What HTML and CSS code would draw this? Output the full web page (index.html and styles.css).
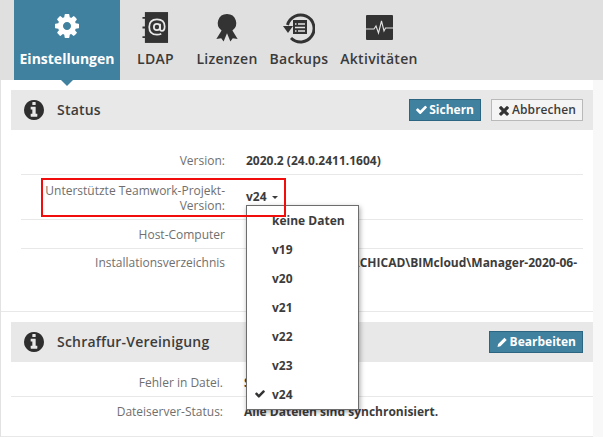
FILE: index.html
```html
<!DOCTYPE html>
<html lang="de">
<head>
<meta charset="utf-8">
<title>Einstellungen</title>
<link rel="stylesheet" href="styles.css">
</head>
<body>
<nav class="tabs">
  <a class="tab tab-active">
    <svg class="tab-icon gear" viewBox="0 0 1792 1792"><path d="M1152 896q0-106-75-181t-181-75-181 75-75 181 75 181 181 75 181-75 75-181zm512-109v222q0 12-8 23t-20 13l-185 28q-19 54-39 91 35 50 107 138 10 12 10 25t-9 23q-27 37-99 108t-94 71q-12 0-26-9l-138-108q-44 23-91 38-16 136-29 186-7 28-36 28h-222q-14 0-24.500-8.500t-11.500-21.500l-28-184q-49-16-90-37l-141 107q-10 9-25 9-14 0-25-11-126-114-165-168-7-10-7-23 0-12 8-23 15-21 51-66.500t54-70.500q-27-50-41-99l-183-27q-13-2-21-12.500t-8-23.500v-222q0-12 8-23t19-13l186-28q14-46 39-92-40-57-107-138-10-12-10-24 0-10 9-23 26-36 98.500-107.500t94.500-71.500q13 0 26 10l138 107q44-23 91-38 16-136 29-186 7-28 36-28h222q14 0 24.500 8.500t11.500 21.500l28 184q49 16 90 37l142-107q9-9 24-9 13 0 25 10 129 119 165 170 7 8 7 22 0 12-8 23-15 21-51 66.500t-54 70.500q26 50 41 98l183 28q13 2 21 12.500t8 23.500z"/></svg>
    <span>Einstellungen</span>
  </a>
  <a class="tab tab-ldap">
    <svg class="tab-icon" viewBox="0 0 28 34">
      <rect x="3" y="1" width="24" height="32" fill="#333"/>
      <path d="M0.5 7h4M0.5 17h4M0.5 27h4" stroke="#333" stroke-width="2" fill="none"/>
      <circle cx="15.500" cy="16.500" r="3.200" fill="none" stroke="#e8e8e8" stroke-width="1.800"/>
      <path d="M18.700 13v5.500q0 2 2 2 2.800 0 2.800-4.500 0-7.500-8-7.500-8 0-8 8 0 8 8 8 2.500 0 4.500-1" fill="none" stroke="#e8e8e8" stroke-width="1.800"/>
    </svg>
    <span>LDAP</span>
  </a>
  <a class="tab tab-license">
    <svg class="tab-icon" viewBox="0 0 24 30"><path d="M12 1a9.500 9.500 0 0 1 5.600 17.200L23 27l-5-1-2.500 3.500-3.500-8.500-3.500 8.500L6 26l-5 1 5.400-8.800A9.500 9.500 0 0 1 12 1z" fill="#333"/></svg>
    <span>Lizenzen</span>
  </a>
  <a class="tab tab-backup">
    <svg class="tab-icon" viewBox="0 0 32 32">
      <path d="M4.500 13A13.500 13.500 0 1 1 8 26" fill="none" stroke="#333" stroke-width="3"/>
      <path d="M0 14h10l-5 7z" fill="#333"/>
      <rect x="10" y="8" width="14" height="14" fill="#333"/>
      <path d="M12 12h1.500M15 12h7M12 15.500h10M12 19h1.500M15 19h7" stroke="#e4e4e4" stroke-width="1.300" fill="none"/>
    </svg>
    <span>Backups</span>
  </a>
  <a class="tab tab-activity">
    <svg class="tab-icon" viewBox="0 0 27 25">
      <rect width="27" height="25" rx="1" fill="#333"/>
      <path d="M0 14h8l2-3 2.500 7 3-12 2.500 10 1.500-3h7.500" fill="none" stroke="#e4e4e4" stroke-width="1.100"/>
    </svg>
    <span>Aktivitäten</span>
  </a>
</nav>

<main class="panel">
  <section class="section section-status">
    <header class="section-head">
      <svg class="info" viewBox="128 128 1536 1536"><path d="M1152 1376v-160q0-14-9-23t-23-9h-96v-512q0-14-9-23t-23-9h-320q-14 0-23 9t-9 23v160q0 14 9 23t23 9h96v320h-96q-14 0-23 9t-9 23v160q0 14 9 23t23 9h448q14 0 23-9t9-23zm-128-896v-160q0-14-9-23t-23-9h-192q-14 0-23 9t-9 23v160q0 14 9 23t23 9h192q14 0 23-9t9-23zm640 416q0 209-103 385.500t-279.500 279.500-385.500 103-385.500-103-279.500-279.500-103-385.500 103-385.500 279.500-279.500 385.500-103 385.500 103 279.500 279.500 103 385.500z"/></svg>
      <h2>Status</h2>
      <div class="actions">
        <button class="btn btn-primary"><svg class="btn-icon" viewBox="110 320 1570 1240"><path d="M1671 566q0 40-28 68l-724 724-136 136q-28 28-68 28t-68-28l-136-136-362-362q-28-28-28-68t28-68l136-136q28-28 68-28t68 28l294 295 656-657q28-28 68-28t68 28l136 136q28 28 28 68z"/></svg>Sichern</button>
        <button class="btn btn-plain"><svg class="btn-icon btn-icon-x" viewBox="290 260 1210 1300"><path d="M1490 1322q0 40-28 68l-136 136q-28 28-68 28t-68-28l-294-294-294 294q-28 28-68 28t-68-28l-136-136q-28-28-28-68t28-68l294-294-294-294q-28-28-28-68t28-68l136-136q28-28 68-28t68 28l294 294 294-294q28-28 68-28t68 28l136 136q28 28 28 68t-28 68l-294 294 294 294q28 28 28 68z"/></svg>Abbrechen</button>
      </div>
    </header>
    <div class="rows">
      <div class="row row-version">
        <div class="label">Version:</div>
        <div class="value">2020.2 (24.0.2411.1604)</div>
      </div>
      <div class="row row-team">
        <div class="label">Unterstützte Teamwork-Projekt-Version:</div>
        <div class="value value-select">v24<i class="caret"></i></div>
      </div>
      <div class="row row-host">
        <div class="label">Host-Computer</div>
        <div class="value"></div>
      </div>
      <div class="row row-path">
        <div class="label">Installationsverzeichnis</div>
        <div class="value">C:\Programmes\ARCHICAD\BIMcloud\Manager-2020-06-</div>
      </div>
    </div>
  </section>

  <section class="section section-hatch">
    <header class="section-head">
      <svg class="info" viewBox="128 128 1536 1536"><path d="M1152 1376v-160q0-14-9-23t-23-9h-96v-512q0-14-9-23t-23-9h-320q-14 0-23 9t-9 23v160q0 14 9 23t23 9h96v320h-96q-14 0-23 9t-9 23v160q0 14 9 23t23 9h448q14 0 23-9t9-23zm-128-896v-160q0-14-9-23t-23-9h-192q-14 0-23 9t-9 23v160q0 14 9 23t23 9h192q14 0 23-9t9-23zm640 416q0 209-103 385.500t-279.500 279.500-385.500 103-385.500-103-279.500-279.500-103-385.500 103-385.500 279.500-279.500 385.500-103 385.500 103 279.500 279.500 103 385.500z"/></svg>
      <h2>Schraffur-Vereinigung</h2>
      <div class="actions">
        <button class="btn btn-primary btn-edit"><svg class="btn-icon" viewBox="0 0 12 12"><path d="M0 12l.8-3.500L8.300 1l2.700 2.700L3.500 11.200z"/></svg>Bearbeiten</button>
      </div>
    </header>
    <div class="rows rows-wide">
      <div class="row row-error">
        <div class="label">Fehler in Datei.</div>
        <div class="value">Status</div>
      </div>
      <div class="row row-server">
        <div class="label">Dateiserver-Status:</div>
        <div class="value">Alle Dateien sind synchronisiert.</div>
      </div>
    </div>
  </section>
</main>

<div class="highlight"></div>
<ul class="menu">
  <li>keine Daten</li>
  <li>v19</li>
  <li>v20</li>
  <li>v21</li>
  <li>v22</li>
  <li>v23</li>
  <li><svg class="menu-check" viewBox="110 320 1570 1240"><path d="M1671 566q0 40-28 68l-724 724-136 136q-28 28-68 28t-68-28l-136-136-362-362q-28-28-28-68t28-68l136-136q28-28 68-28t68 28l294 295 656-657q28-28 68-28t68 28l136 136q28 28 28 68z"/></svg>v24</li>
</ul>
</body>
</html>
```

FILE: styles.css
```css
* { box-sizing: border-box; }
html, body { margin: 0; padding: 0; }
body {
  width: 603px;
  height: 437px;
  overflow: hidden;
  position: relative;
  background: #f8f8f8;
  font-family: "Open Sans", "Noto Sans", sans-serif;
  font-size: 12px;
  color: #3c3c3c;
}

.tabs {
  display: flex;
  height: 80px;
  padding-left: 14px;
  background: #e0e0e0;
}
.tab {
  position: relative;
  display: flex;
  flex-direction: column;
  align-items: center;
  height: 80px;
  font-size: 14px;
  font-weight: 600;
  line-height: 20px;
  letter-spacing: .3px;
  color: #3a3a3a;
  white-space: nowrap;
}
.tab span { position: absolute; top: 49px; }
.tab-icon { display: block; fill: #333; }
.tab-active { width: 106px; background: #40819f; color: #fff; font-weight: 700; letter-spacing: 0; }
.tab-active::after {
  content: "";
  position: absolute;
  left: 47px;
  top: 80px;
  border: 6px solid transparent;
  border-bottom: 0;
  border-top-color: #40819f;
}
.gear { width: 28px; height: 28px; margin-top: 12px; fill: #fff; }
.tab-ldap { width: 71px; }
.tab-ldap .tab-icon { width: 27px; height: 33px; margin-top: 11px; }
.tab-license { width: 72px; }
.tab-license .tab-icon { width: 24px; height: 29px; margin-top: 13px; }
.tab-backup { width: 72px; }
.tab-backup .tab-icon { width: 32px; height: 32px; margin-top: 12px; }
.tab-activity { width: 88px; }
.tab-activity .tab-icon { width: 27px; height: 25px; margin-top: 15px; }

.panel {
  height: 357px;
  margin-right: 10px;
  margin-left: 1px;
  background: #fff;
  box-shadow: -1px 0 0 #e2e2e2;
}

.section { padding-left: 10px; }
.section-status {
  height: 232px;
  padding-top: 10px;
  border-bottom: 1px solid #e8e8e8;
}
.section-hatch {
  height: 125px;
  padding-top: 10px;
  border-bottom: 1px solid #e8e8e8;
}
.section-head {
  display: flex;
  align-items: center;
  height: 40px;
  background: #e8e8e8;
  padding: 0 10px 0 13px;
}
.info { width: 20px; height: 20px; fill: #2e2e2e; flex: none; }
.section-head h2 {
  margin: 0 0 0 13px;
  font-size: 14px;
  font-weight: 600;
  letter-spacing: .2px;
  color: #3c3c3c;
  line-height: 20px;
}
.actions { margin-left: auto; display: flex; gap: 10px; }

.btn {
  display: flex;
  align-items: center;
  height: 22px;
  padding: 0 6px;
  font-family: inherit;
  font-size: 12px;
  line-height: 18px;
  border: 1px solid;
  border-radius: 0;
}
.btn-primary {
  background: #40819f;
  border-color: #2c6581;
  color: #fff;
  font-weight: 700;
}
.btn-edit { padding-left: 7px; }
.btn-plain {
  background: #f4f4f4;
  border-color: #b9b9b9;
  color: #3c3c3c;
  font-weight: 600;
  padding-left: 7px;
  letter-spacing: .1px;
}
.btn-icon { width: 11px; height: 10px; margin-right: 2px; fill: #fff; }
.btn-icon-x { fill: #333; width: 10px; height: 11px; margin-right: 3px; }

.rows { padding: 0 10px; }
.rows-wide { padding: 0; }
.row {
  display: grid;
  grid-template-columns: 204px 1fr;
  column-gap: 21px;
  align-items: center;
  border-bottom: 1px solid #e8e8e8;
  line-height: 15px;
}
.row-version { height: 45px; padding-top: 16px; }
.row-team { height: 45px; padding-top: 2px; }
.row-host { height: 29px; }
.row-path { height: 62px; align-items: start; border-bottom: 0; padding-top: 6px; }
.row-error { grid-template-columns: 212px 1fr; height: 35px; padding-top: 6px; }
.row-server { grid-template-columns: 212px 1fr; height: 29px; border-bottom: 0; }
.label { text-align: right; color: #6f6f6f; font-size: 12px; }
.row-team .label { padding-left: 20px; }
.value { font-weight: 700; color: #3c3c3c; white-space: nowrap; }
.value-select { margin-top: -4px; }
.caret {
  display: inline-block;
  margin-left: 5px;
  vertical-align: middle;
  border: 3.500px solid transparent;
  border-bottom: 0;
  border-top: 3.500px solid #3c3c3c;
}

.highlight {
  position: absolute;
  left: 41px;
  top: 178px;
  width: 245px;
  height: 39px;
  border: 2px solid #f20d0d;
  z-index: 2;
}
.menu {
  position: absolute;
  left: 246px;
  top: 205px;
  width: 113px;
  height: 205px;
  margin: 0;
  padding: 0;
  list-style: none;
  background: #fff;
  border: 1px solid #6d6d6d;
  box-shadow: 1px 2px 5px rgba(0, 0, 0, .35);
  z-index: 1;
}
.menu li {
  position: relative;
  height: 29px;
  padding-left: 25px;
  line-height: 29px;
  font-size: 12px;
  font-weight: 700;
  color: #3c3c3c;
}
.menu-check {
  position: absolute;
  left: 8px;
  top: 10px;
  width: 10px;
  height: 8px;
  fill: #333;
}
```
